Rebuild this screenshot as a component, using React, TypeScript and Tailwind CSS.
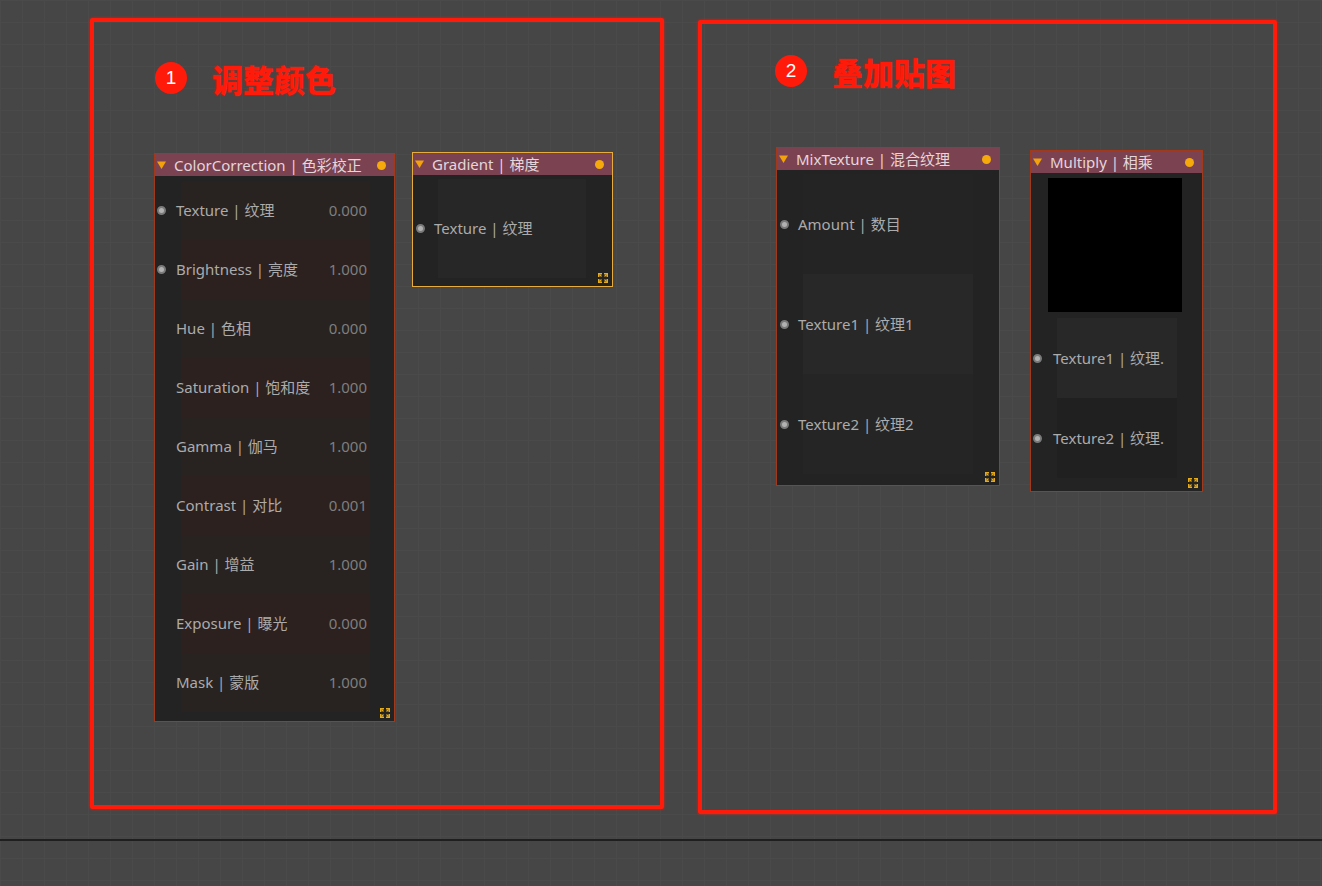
import React from "react";

const FONT = "font-['Noto_Sans','Noto_Sans_CJK_SC',sans-serif]";

type Row = { label: string; value?: string; socket?: boolean };

const CC_ROWS: Row[] = [
  { label: "Texture | 纹理", value: "0.000", socket: true },
  { label: "Brightness | 亮度", value: "1.000", socket: true },
  { label: "Hue | 色相", value: "0.000" },
  { label: "Saturation | 饱和度", value: "1.000" },
  { label: "Gamma | 伽马", value: "1.000" },
  { label: "Contrast | 对比", value: "0.001" },
  { label: "Gain | 增益", value: "1.000" },
  { label: "Exposure | 曝光", value: "0.000" },
  { label: "Mask | 蒙版", value: "1.000" },
];

function Triangle() {
  return (
    <svg width="9" height="8" viewBox="0 0 9 8" className="shrink-0">
      <path d="M0 0.5h9L4.5 8z" fill="#f4a20a" />
    </svg>
  );
}

function ResizeIcon() {
  return (
    <svg width="10" height="10" viewBox="0 0 10 10" className="absolute right-[4px] bottom-[3px]">
      <g fill="#e6aa1e">
        <path d="M0 0h4v1.5H1.5V4H0z" />
        <path d="M10 0H6v1.5h2.5V4H10z" />
        <path d="M0 10h4V8.5H1.5V6H0z" />
        <path d="M10 10H6V8.5h2.5V6H10z" />
      </g>
      <g stroke="#e6aa1e" strokeWidth="1.2">
        <path d="M1.5 1.5l2 2M8.5 1.5l-2 2M1.5 8.5l2-2M8.5 8.5l-2-2" />
      </g>
    </svg>
  );
}

function Socket() {
  return <span className="block w-[9px] h-[9px] rounded-full bg-[#b2b2b2] border-2 border-[#7a7a7a] shrink-0" />;
}

function Node({
  title,
  width,
  selected = false,
  children,
}: {
  title: string;
  width: string;
  selected?: boolean;
  children: React.ReactNode;
}) {
  return (
    <div
      className={`relative flex flex-col border bg-[#232323] ${width} ${
        selected ? "border-[#e8ac3c]" : "border-[#a3391b]"
      }`}
    >
      <div className="flex items-center h-[22px] bg-[#7b4252] pl-[2px] pr-[8px]">
        <Triangle />
        <span className="ml-[8px] text-[15px] leading-none text-[#e4d6da] whitespace-nowrap">{title}</span>
        <span className="ml-auto w-[9px] h-[9px] rounded-full bg-[#f6a90a] shrink-0" />
      </div>
      {children}
      <ResizeIcon />
    </div>
  );
}

function Label({ num, text }: { num: string; text: string }) {
  return (
    <div className="flex items-center">
      <div className="flex items-center justify-center w-[32px] h-[32px] rounded-full bg-[#ff1a0a] text-white text-[19px] font-['Liberation_Sans',sans-serif]">
        {num}
      </div>
      <span className="ml-[25px] text-[31px] font-black leading-none text-[#ff1a0a] font-['Noto_Sans_CJK_SC',sans-serif] [text-shadow:0_0_2px_rgba(255,26,10,0.6)]">
        {text}
      </span>
    </div>
  );
}

function ColorCorrection() {
  return (
    <Node title="ColorCorrection | 色彩校正" width="w-[241px]">
      <div className="flex flex-col pt-[5px] pb-[9px]">
        {CC_ROWS.map((r, i) => (
          <div
            key={r.label}
            className={`flex items-center h-[59px] pl-[2px] pr-[27px] ${
              i % 2 === 0
                ? "bg-[linear-gradient(to_right,transparent_26px,#282321_26px,#282321_215px,transparent_215px)]"
                : "bg-[linear-gradient(to_right,transparent_26px,#2c211f_26px,#2c211f_215px,transparent_215px)]"
            }`}
          >
            <span className="w-[9px] shrink-0">{r.socket && <Socket />}</span>
            <span className="ml-[10px] text-[15px] text-[#ababab] whitespace-nowrap">{r.label}</span>
            <span className="ml-auto text-[15px] text-[#7e7e7e]">{r.value}</span>
          </div>
        ))}
      </div>
    </Node>
  );
}

function Gradient() {
  return (
    <Node title="Gradient | 梯度" width="w-[201px]" selected>
      <div className="flex flex-col pt-[4px] pb-[8px]">
        <div className="flex items-center h-[99px] pl-[3px] bg-[linear-gradient(to_right,transparent_25px,#272727_25px,#272727_173px,transparent_173px)]">
          <Socket />
          <span className="ml-[9px] text-[15px] text-[#ababab] whitespace-nowrap">Texture | 纹理</span>
        </div>
      </div>
    </Node>
  );
}

function MixTexture() {
  const rows = [
    { label: "Amount | 数目", bg: "bg-[linear-gradient(to_right,transparent_26px,#242424_26px,#242424_196px,transparent_196px)]" },
    { label: "Texture1 | 纹理1", bg: "bg-[linear-gradient(to_right,transparent_26px,#282828_26px,#282828_196px,transparent_196px)]" },
    { label: "Texture2 | 纹理2", bg: "bg-[linear-gradient(to_right,transparent_26px,#252525_26px,#252525_196px,transparent_196px)]" },
  ];
  return (
    <Node title="MixTexture | 混合纹理" width="w-[224px]">
      <div className="flex flex-col pt-[4px] pb-[11px]">
        {rows.map((r) => (
          <div key={r.label} className={`flex items-center h-[100px] pl-[3px] ${r.bg}`}>
            <Socket />
            <span className="ml-[9px] text-[15px] text-[#ababab] whitespace-nowrap">{r.label}</span>
          </div>
        ))}
      </div>
    </Node>
  );
}

function Multiply() {
  return (
    <Node title="Multiply | 相乘" width="w-[173px]">
      <div className="flex flex-col pt-[5px] pb-[13px]">
        <div className="ml-[17px] w-[134px] h-[134px] bg-black" />
        <div className="flex flex-col mt-[6px]">
          <div className="flex items-center h-[80px] pl-[2px] bg-[linear-gradient(to_right,transparent_26px,#282828_26px,#282828_146px,transparent_146px)]">
            <Socket />
            <span className="ml-[11px] text-[15px] text-[#ababab] whitespace-nowrap">Texture1 | 纹理.</span>
          </div>
          <div className="flex items-center h-[80px] pl-[2px] bg-[linear-gradient(to_right,transparent_26px,#202020_26px,#202020_146px,transparent_146px)]">
            <Socket />
            <span className="ml-[11px] text-[15px] text-[#ababab] whitespace-nowrap">Texture2 | 纹理.</span>
          </div>
        </div>
      </div>
    </Node>
  );
}

export default function App() {
  return (
    <div
      className={`${FONT} w-[1322px] h-[886px] overflow-hidden flex flex-col bg-[#464646] bg-[linear-gradient(to_right,#4a4a4a_1px,transparent_1px),linear-gradient(to_bottom,#4a4a4a_1px,transparent_1px)] bg-[size:22px_22px]`}
    >
      <div className="flex items-start h-[839px] pl-[90px] pt-[18px]">
        {/* 1 调整颜色 */}
        <div className="w-[574px] h-[791px] border-[4px] border-[#ff1a0a] rounded-[2px] shadow-[0_0_3px_rgba(255,26,10,0.7)] flex flex-col">
          <div className="mt-[40px] ml-[61px]">
            <Label num="1" text="调整颜色" />
          </div>
          <div className="flex items-start mt-[58px] ml-[60px]">
            <div className="mt-[1px]">
              <ColorCorrection />
            </div>
            <div className="ml-[17px]">
              <Gradient />
            </div>
          </div>
        </div>

        {/* 2 叠加贴图 */}
        <div className="ml-[34px] mt-[2px] w-[579px] h-[794px] border-[4px] border-[#ff1a0a] rounded-[2px] shadow-[0_0_3px_rgba(255,26,10,0.7)] flex flex-col">
          <div className="mt-[31px] ml-[73px]">
            <Label num="2" text="叠加贴图" />
          </div>
          <div className="flex items-start mt-[60px] ml-[74px]">
            <MixTexture />
            <div className="ml-[30px] mt-[3px]">
              <Multiply />
            </div>
          </div>
        </div>
      </div>
      <div className="h-[2px] bg-[#1f1f1f]" />
    </div>
  );
}
